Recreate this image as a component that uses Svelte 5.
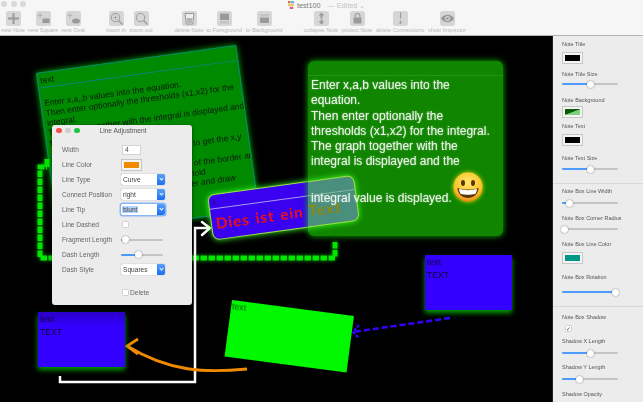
<script>
  const tools = [
    { name: 'plus', label: 'new Note', gap: 1 },
    { name: 'square', label: 'new Square', gap: 6 },
    { name: 'oval', label: 'new Oval', gap: 6 },
    { name: 'zoomin', label: 'zoom in', gap: 19 },
    { name: 'zoomout', label: 'zoom out', gap: 1 },
    { name: 'trash', label: 'delete Note', gap: 24 },
    { name: 'front', label: 'to Foreground', gap: 11 },
    { name: 'back', label: 'to Background', gap: 16 },
    { name: 'collapse', label: 'collapse Note', gap: 33 },
    { name: 'lock', label: 'protect Note', gap: 12 },
    { name: 'cut', label: 'delete Connections', gap: 19 },
    { name: 'eye', label: 'show Inspector', gap: 23 }
  ];

  // inspector rows, top to bottom, mt = space above the row
  const rows = [
    { type: 'label', text: 'Note Title', mt: 4.5 },
    { type: 'swatch', cls: 'black', mt: 4.5 },
    { type: 'label', text: 'Note Title Size', mt: 6.5 },
    { type: 'slider', pct: 50, mt: 5.5 },
    { type: 'label', text: 'Note Background', mt: 11.5 },
    { type: 'swatch', cls: 'bg', mt: 2.5 },
    { type: 'label', text: 'Note Text', mt: 4.5 },
    { type: 'swatch', cls: 'black', mt: 4.5 },
    { type: 'label', text: 'Note Text Size', mt: 8.5 },
    { type: 'slider', pct: 50, mt: 6.5 },
    { type: 'rule', mt: 13 },
    { type: 'label', text: 'Note Box Line Width', mt: 3.5 },
    { type: 'slider', pct: 14, mt: 7.5 },
    { type: 'label', text: 'Note Box Corner Radius', mt: 10.5 },
    { type: 'slider', pct: 5, mt: 6.5 },
    { type: 'label', text: 'Note Box Line Color', mt: 10.5 },
    { type: 'swatch', cls: 'teal', mt: 4.5 },
    { type: 'label', text: 'Note Box Rotation', mt: 9.5 },
    { type: 'slider', pct: 96, mt: 10.5 },
    { type: 'rule', mt: 13 },
    { type: 'label', text: 'Note Box Shadow', mt: 6.5 },
    { type: 'check', mt: 4.5 },
    { type: 'label', text: 'Shadow X Length', mt: 5.5 },
    { type: 'slider', pct: 50, mt: 7.5 },
    { type: 'label', text: 'Shadow Y Length', mt: 9.5 },
    { type: 'slider', pct: 32, mt: 7.5 },
    { type: 'label', text: 'Shadow Opacity', mt: 10.5 }
  ];
</script>

{#snippet icon(name)}
  <svg viewBox="0 0 15 15" width="15" height="15">
    <rect width="15" height="15" rx="2.5" fill="#d6d6d6" />
    {#if name === 'plus'}
      <path d="M7.5 2v11M2 7.5h11" stroke="#9a9a9a" stroke-width="2" />
    {:else if name === 'square'}
      <path d="M4 2v5M1.500 4.500h5" stroke="#a8a8a8" stroke-width="0.8" />
      <rect x="6.500" y="7.500" width="7" height="4.500" fill="#9a9a9a" />
    {:else if name === 'oval'}
      <path d="M4 2v5M1.500 4.500h5" stroke="#a8a8a8" stroke-width="0.8" />
      <ellipse cx="10" cy="10" rx="4" ry="2.500" fill="#9a9a9a" />
    {:else if name === 'zoomin'}
      <circle cx="6.500" cy="6.500" r="4.200" fill="none" stroke="#9a9a9a" />
      <path d="M9.800 9.800l3.700 3.700" stroke="#9a9a9a" stroke-width="1.300" />
      <path d="M6.500 4.500v4M4.500 6.500h4" stroke="#9a9a9a" stroke-width="0.7" />
    {:else if name === 'zoomout'}
      <circle cx="6.500" cy="6.500" r="4.200" fill="none" stroke="#9a9a9a" />
      <path d="M9.800 9.800l3.700 3.700" stroke="#9a9a9a" stroke-width="1.300" />
    {:else if name === 'trash'}
      <path d="M3 2.500h9l-1.300 10.500h-6.400z" fill="#ededed" stroke="#9a9a9a" />
      <path d="M4.500 7h6l-.8 5h-4.400z" fill="#b4b4b4" />
    {:else if name === 'front'}
      <rect x="3" y="2.500" width="9" height="6.500" fill="#9a9a9a" />
      <rect x="3" y="10" width="9" height="2.500" fill="#c4c4c4" />
    {:else if name === 'back'}
      <rect x="3" y="3" width="9" height="2.500" fill="#c4c4c4" />
      <rect x="3" y="6.500" width="9" height="5.500" fill="#9a9a9a" />
    {:else if name === 'collapse'}
      <path d="M7.500 1.500l3 3h-2v3h-2v-3h-2zM7.500 13.500l3-3h-2v-2h-2v2h-2z" fill="#9a9a9a" />
    {:else if name === 'lock'}
      <rect x="3.500" y="6.500" width="8" height="6" rx="0.800" fill="#9a9a9a" />
      <path d="M5 6.500v-1.500a2.500 2.500 0 0 1 5 0v1.500" fill="none" stroke="#9a9a9a" stroke-width="1.100" />
    {:else if name === 'cut'}
      <path d="M7.500 1.500v6" stroke="#9a9a9a" stroke-width="1.100" />
      <path d="M7.500 9v3.500M5.800 10.800l1.700 2 1.700-2" fill="none" stroke="#9a9a9a" stroke-width="0.800" />
    {:else if name === 'eye'}
      <path d="M1 7.500c3-5 10-5 13 0c-3 5-10 5-13 0z" fill="#9a9a9a" />
      <circle cx="7.500" cy="7.500" r="2.500" fill="#d6d6d6" />
      <circle cx="7.500" cy="7.500" r="1.300" fill="#9a9a9a" />
    {/if}
  </svg>
{/snippet}

{#snippet slider(pct, cls = '', mt = 0)}
  <div class="slider {cls}" style="margin-top:{mt}px">
    <div class="fill" style="width:{pct}%"></div>
    <div class="thumb" style="left:{pct}%"></div>
  </div>
{/snippet}

{#snippet select(value, focused = false)}
  <div class="select" class:focused>
    <span>{value}</span>
    <i></i>
  </div>
{/snippet}

{#snippet swatch(cls, mt = 0)}
  <div class="swatch" style="margin-top:{mt}px"><div class={cls}></div></div>
{/snippet}

{#snippet blueNote(cls)}
  <div class="blue-note {cls}">
    <div class="blue-head">1</div>
    <div class="blue-text">Dies ist ein Text</div>
  </div>
{/snippet}

<div class="app">
  <header class="toolbar">
    <div class="titlebar">
      <div class="lights"><b></b><b></b><b></b></div>
      <div class="doc">
        <svg viewBox="0 0 8 10" width="7" height="9">
          <rect x="0" y="0" width="2.500" height="2.500" fill="#e8622c" />
          <rect x="3" y="0" width="4" height="2.500" fill="#52b7d8" />
          <rect x="0" y="3.500" width="7" height="2" fill="#f2c14e" />
          <rect x="2" y="6.500" width="4" height="2.500" fill="#d95b8c" />
        </svg>
        <span class="name">test100</span>
        <span class="edited">— Edited ⌄</span>
      </div>
    </div>
    <div class="tools">
      {#each tools as t}
        <div class="tool" style="margin-left:{t.gap}px">
          {@render icon(t.name)}
          <span>{t.label}</span>
        </div>
      {/each}
    </div>
  </header>

  <div class="main">
    <section class="canvas">
      <div class="note-tilted">
        <div class="tilted-head">text</div>
        <div class="tilted-body">
          Enter x,a,,b values into the equation.<br />
          Then enter optionally the thresholds (x1,x2) for the<br />
          integral.<br />
          The graph together with the integral is displayed and<br />
          the integral value is displayed.<br />
          <br />
          You can move the slider now in order to get the x,y<br />
          values.<br />
          Optionally you may change the color of the border and<br />
          the lines of the graph or of the threshold<br />
          lines. You can also change the border and draw<br />
          lines for the second threshold.
        </div>
      </div>

      <svg class="wires" viewBox="0 0 552 365" width="552" height="365">
        <g transform="translate(0,-36)" fill="none">
          <g class="green-wire">
            <path d="M335 242v16H40V167h7" stroke-dasharray="6.500 1.500" />
            <path d="M47 167v-8" />
          </g>
          <g stroke="#fff" stroke-width="2.500">
            <path d="M60 376v6h135V228h15" />
            <path d="M202 222l8 6l-8 7" stroke-linecap="round" />
          </g>
          <g stroke="#f08a00" stroke-width="2.800">
            <path d="M247 369C205 373 170 372 127 346" />
            <path d="M138 339l-11 7l11 8" />
          </g>
          <g stroke="#3300ff" stroke-width="2.500">
            <path d="M450 318L353 332" stroke-dasharray="6 3" />
            <path d="M359 325l-6 7l6 6" stroke-dasharray="3 1.500" />
          </g>
        </g>
      </svg>

      {@render blueNote('')}

      <div class="note-glass">
        <div class="overlap">{@render blueNote('ghost')}</div>
        <div class="glass-head"></div>
        <p>
          Enter x,a,b values into the<br />
          equation.<br />
          Then enter optionally the<br />
          thresholds (x1,x2) for the integral.<br />
          The graph together with the<br />
          integral is displayed and the<br />
          <br />
          <span class="last">integral value is displayed.</span>
        </p>
        <svg class="smiley" viewBox="0 0 30 30" width="30" height="30">
          <defs>
            <radialGradient id="face" cx="50%" cy="35%" r="65%">
              <stop offset="0" stop-color="#ffe96a" />
              <stop offset="0.750" stop-color="#fcc22b" />
              <stop offset="1" stop-color="#e8820e" />
            </radialGradient>
          </defs>
          <circle cx="15" cy="15" r="14.500" fill="url(#face)" />
          <ellipse cx="10" cy="11" rx="2" ry="3" fill="#5a3608" />
          <ellipse cx="20" cy="11" rx="2" ry="3" fill="#5a3608" />
          <path d="M4.500 16c6 2 15 2 21 0c0 6-5 10-10.500 10s-10.500-4-10.500-10z" fill="#5a3608" />
          <path d="M6 17c5.500 1.500 12.500 1.500 18 0c-.2 2.500-1 4-2 5c-4 1-10 1-14 0c-1-1-1.800-2.500-2-5z" fill="#fff" />
        </svg>
      </div>

      <div class="square sq-a">
        <div class="sq-title">text</div>
        <div class="sq-body">TEXT</div>
      </div>
      <div class="square sq-b">
        <div class="sq-title">text</div>
        <div class="sq-body">TEXT</div>
      </div>
      <div class="rect-green">text</div>

      <div class="dialog">
        <div class="dialog-title">
          <div class="dialog-lights"><b class="r"></b><b class="g"></b><b class="v"></b></div>
          Line Adjustment
        </div>
        <div class="form">
          <label for="lw">Width</label>
          <input id="lw" class="num" value="4" />
          <span>Line Color</span>
          {@render swatch('orange')}
          <span>Line Type</span>
          {@render select('Curve')}
          <span>Connect Position</span>
          {@render select('right')}
          <span>Line Tip</span>
          {@render select('blunt', true)}
          <span>Line Dashed</span>
          <div class="check"></div>
          <span>Fragment Length</span>
          {@render slider(10, 'short')}
          <span>Dash Length</span>
          {@render slider(42, 'short')}
          <span>Dash Style</span>
          {@render select('Squares')}
        </div>
        <div class="delete"><div class="check"></div>Delete</div>
      </div>
    </section>

    <aside class="inspector">
      {#each rows as r}
        {#if r.type === 'label'}
          <div class="lbl" style="margin-top:{r.mt}px">{r.text}</div>
        {:else if r.type === 'swatch'}
          {@render swatch(r.cls, r.mt)}
        {:else if r.type === 'slider'}
          {@render slider(r.pct, '', r.mt)}
        {:else if r.type === 'rule'}
          <hr style="margin-top:{r.mt}px" />
        {:else}
          <div class="check ticked" style="margin-top:{r.mt}px">✓</div>
        {/if}
      {/each}
    </aside>
  </div>
</div>

<style>
  :global(body) {
    margin: 0;
    background: #000;
  }

  .app {
    width: 643px;
    height: 402px;
    overflow: hidden;
    font-family: "Liberation Sans", Arial, sans-serif;
    filter: blur(0.4px);
    display: flex;
    flex-direction: column;
  }

  /* window chrome */
  .toolbar {
    height: 36px;
    box-sizing: border-box;
    flex: none;
    background: #f6f6f6;
    border-bottom: 1px solid #b4b4b4;
  }

  .titlebar {
    height: 9px;
    display: flex;
  }

  .lights {
    display: flex;
    gap: 3.500px;
    padding: 1px 0 0 1px;
  }

  .lights b {
    width: 6px;
    height: 6px;
    border-radius: 50%;
    background: #d8d8d8;
  }

  .doc {
    margin-left: 262px;
    display: flex;
    align-items: center;
    gap: 2px;
    font-size: 7.200px;
    padding-top: 1px;
    height: 8px;
  }

  .name { color: #777; }
  .edited { color: #c4c4c4; margin-left: 5px; }

  .tools {
    display: flex;
    margin-top: 2px;
  }

  .tool {
    width: 24px;
    flex: none;
    display: flex;
    flex-direction: column;
    align-items: center;
    gap: 1px;
    white-space: nowrap;
    font-size: 5.700px;
    line-height: 7px;
    color: #b8b8b8;
  }

  .tool svg { display: block; }

  .main {
    flex: 1;
    display: flex;
    min-height: 0;
  }

  /* free canvas, notes sit at their own places */
  .canvas {
    width: 553px;
    flex: none;
    position: relative;
    background: #000;
    overflow: hidden;
    border-right: 1px solid #222;
    box-sizing: border-box;
  }

  .wires {
    position: absolute;
    left: 0;
    top: 0;
  }

  .green-wire {
    stroke: #00e600;
    stroke-width: 5;
    filter: drop-shadow(0 0 2px #00a000);
  }

  .note-tilted {
    position: absolute;
    left: 36px;
    top: 37px;
    width: 202px;
    height: 166px;
    box-sizing: border-box;
    transform: rotate(-8deg);
    transform-origin: 0 0;
    background: #008a00;
    border: 1px solid #0a8678;
    box-shadow: 0 0 6px #00b000;
    color: #0c1a0c;
    overflow: hidden;
  }

  .tilted-head {
    height: 14px;
    border-bottom: 1px solid #0a8678;
    font-size: 8.800px;
    line-height: 15px;
    padding-left: 2px;
  }

  .tilted-body {
    padding: 10px 0 0 3px;
    font-size: 8.500px;
    line-height: 10px;
    white-space: nowrap;
  }

  .blue-note {
    position: absolute;
    left: 207px;
    top: 159px;
    width: 148px;
    height: 46px;
    box-sizing: border-box;
    transform: rotate(-7.800deg);
    transform-origin: 0 0;
    border-radius: 7px;
    border: 1px solid #9ee04a;
    background: #3a00f0;
    box-shadow: 0 0 6px #3cff20;
    overflow: hidden;
  }

  .blue-head {
    height: 13px;
    border-bottom: 1px solid #a99bee;
    font-size: 7px;
    line-height: 14px;
    padding-left: 3px;
    color: #111;
  }

  .blue-text {
    font-family: "Lato", cursive;
    font-size: 15px;
    font-weight: 700;
    line-height: 20px;
    letter-spacing: 1.100px;
    word-spacing: 1px;
    padding: 4px 0 0 4px;
    color: #f01010;
    white-space: nowrap;
  }

  .note-glass {
    position: absolute;
    left: 308px;
    top: 25px;
    width: 195px;
    height: 175px;
    border-radius: 6px;
    background: #108500;
    box-shadow: 0 0 6px #11b300;
    overflow: hidden;
    color: #f0f8ee;
  }

  .overlap {
    position: absolute;
    left: -308px;
    top: -25px;
    width: 553px;
    height: 365px;
  }

  .blue-note.ghost {
    background: #4a8e7d;
  }

  .ghost .blue-head {
    color: transparent;
    border-bottom-color: #85b5a0;
  }

  .ghost .blue-text { color: #8d8a12; }

  .glass-head {
    height: 14px;
    border-bottom: 1px solid #1d9a10;
  }

  .note-glass p {
    position: relative;
    margin: 0;
    padding: 2px 0 0 3px;
    font-size: 12px;
    line-height: 15.300px;
    white-space: nowrap;
    text-shadow: 0 0 2px rgba(255, 255, 255, 0.5);
  }

  .last {
    display: inline-block;
    margin-top: 6px;
  }

  .smiley {
    position: absolute;
    left: 145px;
    top: 111px;
    filter: drop-shadow(0 0 2px #ffe000);
  }

  .square {
    position: absolute;
    background: #3300ff;
    box-shadow: 0 3px 5px #00a000;
    color: #10063a;
  }

  .sq-a {
    left: 38px;
    top: 276px;
    width: 87px;
    height: 55px;
    background: linear-gradient(#2a00c8, #3300ff 14px);
  }

  .sq-b {
    left: 425px;
    top: 219px;
    width: 87px;
    height: 55px;
  }

  .sq-title {
    font-size: 8.800px;
    line-height: 14px;
    padding-left: 2px;
  }

  .sq-body {
    font-size: 8.600px;
    line-height: 10px;
    padding: 1px 0 0 2px;
  }

  .rect-green {
    position: absolute;
    left: 232px;
    top: 264px;
    width: 123px;
    height: 57px;
    transform: rotate(7.500deg);
    transform-origin: 0 0;
    background: #00f800;
    font-size: 8.800px;
    line-height: 13px;
    color: #0a5a0a;
    padding-left: 1px;
    box-sizing: border-box;
  }

  /* floating panel */
  .dialog {
    position: absolute;
    left: 52px;
    top: 89px;
    width: 140px;
    height: 180px;
    box-sizing: border-box;
    background: #ececec;
    border-radius: 3px;
    box-shadow: 0 1px 4px rgba(0, 0, 0, 0.5);
    color: #666;
    font-size: 6.600px;
  }

  .dialog-title {
    height: 11px;
    position: relative;
    text-align: center;
    line-height: 12px;
    color: #555;
    padding-left: 2px;
  }

  .dialog-lights {
    position: absolute;
    left: 4px;
    top: 2.500px;
    display: flex;
    gap: 3.500px;
  }

  .dialog-lights b {
    width: 5.500px;
    height: 5.500px;
    border-radius: 50%;
  }

  .r { background: #fb4d4b; }
  .g { background: #cfcfcf; }
  .v { background: #1fc63c; }

  .form {
    display: grid;
    grid-template-columns: 59px 46px;
    grid-auto-rows: 15px;
    align-items: center;
    padding: 6px 0 0 10px;
  }

  .num {
    width: 19px;
    height: 10px;
    box-sizing: border-box;
    border: 1px solid #d4d4d4;
    background: #fff;
    padding: 0 0 0 2px;
    margin: 0 0 0 1px;
    font: 6.600px "Liberation Sans", Arial, sans-serif;
    color: #444;
    outline: none;
  }

  .select {
    width: 44px;
    height: 11px;
    box-sizing: border-box;
    display: flex;
    align-items: center;
    background: #fff;
    border-radius: 2px;
    box-shadow: 0 0 1px rgba(0, 0, 0, 0.5);
    color: #444;
    padding-left: 2px;
    position: relative;
    overflow: hidden;
  }

  .select i {
    position: absolute;
    right: 0;
    top: 0;
    bottom: 0;
    width: 8px;
    background: linear-gradient(#5aa0fb, #1a6ff0);
  }

  .select i::after {
    content: '';
    position: absolute;
    left: 2.500px;
    top: 3px;
    width: 2px;
    height: 2px;
    border-right: 1px solid #fff;
    border-bottom: 1px solid #fff;
    transform: rotate(45deg);
  }

  .select.focused {
    box-shadow: 0 0 0 1.500px #88b6f2;
  }

  .select.focused span {
    background: #b5d3fb;
    padding: 0 1px;
    margin-left: -1px;
  }

  .check {
    width: 7px;
    height: 7px;
    box-sizing: border-box;
    background: #fff;
    border: 1px solid #d0d0d0;
    border-radius: 1.500px;
    margin-left: 1px;
  }

  .delete {
    margin: 12px 0 0 69px;
    display: flex;
    align-items: center;
    gap: 1px;
  }

  .swatch {
    width: 21px;
    height: 12px;
    box-sizing: border-box;
    background: #f4f4f4;
    border: 1px solid #c6c6c6;
    padding: 2px;
  }

  .swatch div {
    width: 100%;
    height: 100%;
  }

  .orange { background: #f08a00; }
  .black { background: #000; }
  .teal { background: #009688; }
  .bg { background: linear-gradient(160deg, #0a5a0a 0 48%, #7ccf7c 52%); }

  .slider {
    position: relative;
    width: 56px;
    height: 2px;
    background: #c4c4c4;
    border-radius: 1px;
  }

  .slider.short {
    width: 42px;
  }

  .fill {
    height: 100%;
    background: #4c9cff;
    border-radius: 1px;
  }

  .thumb {
    position: absolute;
    top: -2.500px;
    width: 7px;
    height: 7px;
    margin-left: -3.500px;
    background: #fff;
    border-radius: 50%;
    box-shadow: 0 0 1.500px rgba(0, 0, 0, 0.6);
  }

  .inspector {
    flex: 1;
    background: #ececec;
    padding: 0 0 0 9px;
    color: #555;
    font-size: 5.500px;
    overflow: hidden;
  }

  .lbl {
    height: 7px;
    line-height: 7px;
    white-space: nowrap;
  }

  .ticked {
    font-size: 6px;
    line-height: 6px;
    color: #444;
    text-align: center;
    margin-left: 3px;
  }

  hr {
    height: 1px;
    margin: 0 0 0 -9px;
    border: 0;
    background: #d8d8d8;
  }
</style>
